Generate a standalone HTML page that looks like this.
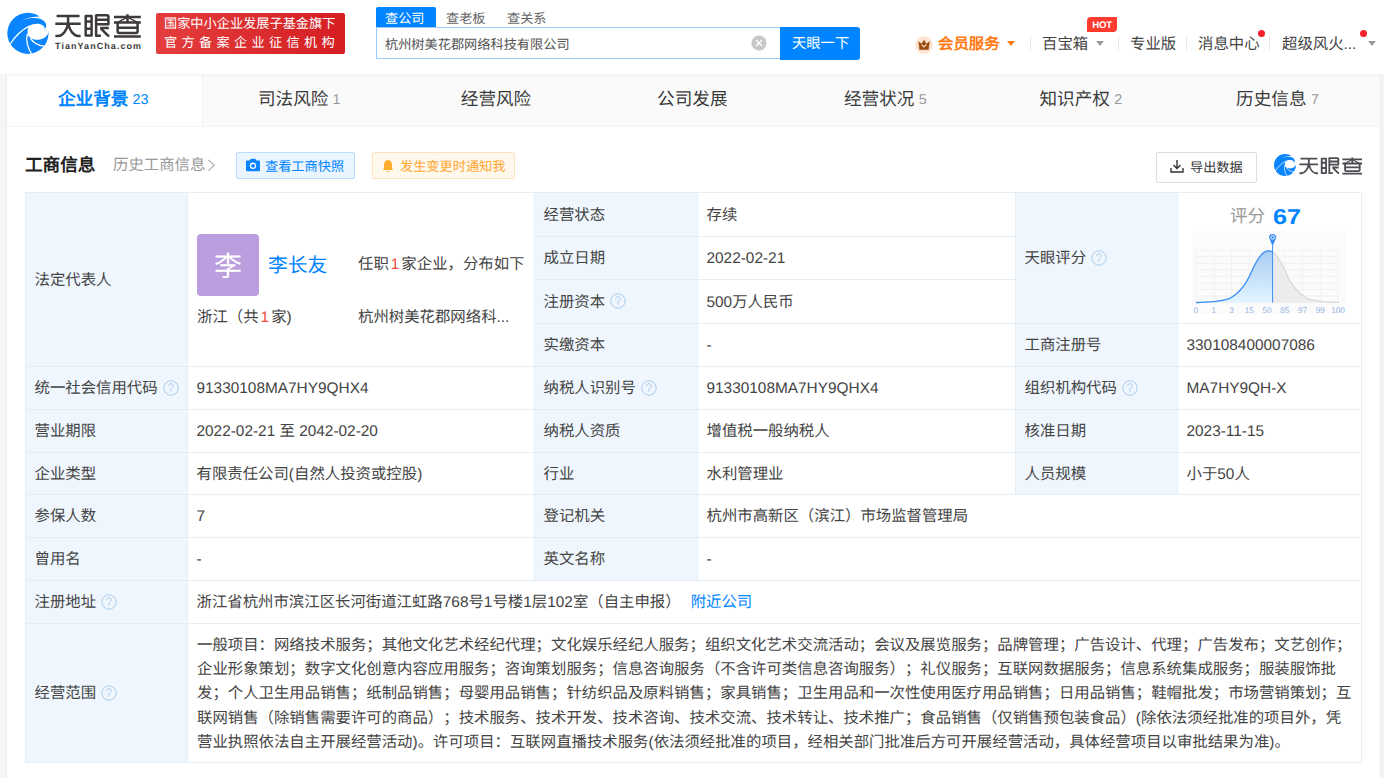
<!DOCTYPE html>
<html lang="zh-CN"><head><meta charset="utf-8"><style>
*{box-sizing:border-box;margin:0;padding:0}
html,body{width:1384px;height:778px;overflow:hidden;background:#f5f5f5;font-family:"Liberation Sans",sans-serif;color:#333;text-spacing-trim:space-all;text-rendering:geometricPrecision}
.abs{position:absolute}
.t{position:absolute;white-space:nowrap;line-height:20px}
.cell{position:absolute;overflow:hidden}
.lt{position:absolute;left:0;top:0;right:0;bottom:0;display:flex;align-items:center;padding-left:8.5px;padding-top:2px;font-size:15.4px;line-height:20px;white-space:nowrap;color:#444}
.a{position:relative;top:0px}
.q{display:inline-block;vertical-align:middle;margin-left:5px;position:relative;top:-1px}
</style></head><body>

<div class="abs" style="left:0;top:0;width:1384px;height:74px;background:#fff"></div>
<svg class="abs" style="left:4px;top:10px" width="48" height="48" viewBox="4 10 48 48"><circle cx="27.9" cy="33.3" r="20.6" fill="#0a84ff"/>
<path d="M29.1,26.2 C33,23.2 40,23 43,25.5 C44.8,27 45.2,28.5 44.4,29.7 L48.9,31.6 C48,35.5 44.5,38.8 40,39.6 C36,40.2 33,39.5 31.5,38.6 C29,37 27.8,35.8 27.7,34.6 C27.2,31 27.8,28 29.1,26.2 Z" fill="#fff"/>
<path d="M9.5,45 C15,36.5 22,29.5 29.6,25.9" stroke="#fff" stroke-width="1.3" fill="none"/>
<path d="M27.3,34 C25.8,40 27.3,47 31.8,54.5" stroke="#fff" stroke-width="1.3" fill="none"/>
<path d="M30.3,38.2 C33,42.5 38,45.5 44.5,46.4" stroke="#fff" stroke-width="1.3" fill="none"/>
<path d="M21.2,20.7 C25.5,18.2 31.5,16.6 38.9,16.4 L40,8 H53 V31.9 L48.6,31.9 L44.5,29.7 C46.4,27.6 46.7,24.6 45.5,22.6 C43,18.9 37,17.6 31,18.1 C27.2,18.5 24,19.5 21.2,20.7 Z" fill="#fff"/></svg>
<svg class="abs" style="left:0;top:0" width="150" height="45" viewBox="0 0 150 45"><g fill="none" stroke="#3e3a39" stroke-width="2.5" stroke-linecap="butt" stroke-linejoin="round">
<path d="M56.6,16 H79.6 M55.3,23.7 H80.7 M68.1,16 V23.7"/>
<path d="M68,23.7 C66.8,30 63,35.9 58,35.9 H55.4"/>
<path d="M68.2,23.7 C69.6,30 73.4,35.9 78.4,35.9 H80.6"/>
<path d="M85.7,15.9 H91.6 V35.6 H85.7 Z M85.7,21.5 H91.6 M85.7,28.7 H91.6"/>
<path d="M96.1,14.4 V35.8 H100.9"/>
<path d="M96.1,15.2 H107 Q108.4,15.2 108.4,16.6 V24.2 H96.1 M96.1,19.8 H108.4"/>
<path d="M100.2,28 H108.8 M100.8,28.3 L107.2,34.8 Q108,35.7 109.4,35.8"/>
<path d="M114,16.9 H140.8 M127.5,14.3 V21.8 M114,22.6 H140.8 M114,36.5 H140.8"/>
<path d="M117.65,22.6 V31.3 Q117.65,32.9 119.3,32.9 H136 Q137.6,32.9 137.6,31.3 V22.6 M117.65,27.8 H137.6"/>
<path d="M127.5,17.2 L117.6,22.4 M127.5,17.2 L137.5,22.4" stroke-width="1.5"/>
</g></svg>
<div class="t" style="left:55px;top:40px;font-size:9px;line-height:12px;color:#3e3a39;font-weight:bold;letter-spacing:1.05px">TianYanCha.com</div>
<div class="abs" style="left:156px;top:13px;width:189px;height:41px;border-radius:2px;background:linear-gradient(90deg,#e43d3d,#d41e22)"></div>
<div class="t" style="left:164px;top:14px;font-size:13.2px;line-height:20px;color:#fff">国家中小企业发展子基金旗下</div>
<div class="t" style="left:164px;top:33px;font-size:13.2px;line-height:20px;color:#fff;letter-spacing:4.3px">官方备案企业征信机构</div>
<div class="abs" style="left:376px;top:7px;width:60px;height:20px;background:#0084ff;border-radius:2px 2px 0 0"></div>
<div class="t" style="left:385px;top:8.5px;font-size:13.2px;line-height:20px;color:#fff">查公司</div>
<div class="t" style="left:446px;top:8.5px;font-size:13.2px;line-height:20px;color:#666">查老板</div>
<div class="t" style="left:507px;top:8.5px;font-size:13.2px;line-height:20px;color:#666">查关系</div>
<div class="abs" style="left:376px;top:27px;width:406px;height:32px;border:1px solid #9ccbff;border-right:none;background:#fff"></div>
<div class="t" style="left:385px;top:35px;font-size:13.2px;line-height:20px;color:#555">杭州树美花郡网络科技有限公司</div>
<svg class="abs" style="left:751px;top:35px" width="16" height="16" viewBox="0 0 16 16"><circle cx="8" cy="8" r="7.6" fill="#c8c8c8"/><path d="M5 5L11 11M11 5L5 11" stroke="#fff" stroke-width="1.3"/></svg>
<div class="abs" style="left:780px;top:27px;width:80px;height:32.5px;background:#0084ff;border-radius:0 3px 3px 0"></div>
<div class="t" style="left:792px;top:34px;font-size:14.3px;line-height:20px;color:#fff">天眼一下</div>
<svg class="abs" style="left:915px;top:36px" width="18" height="18" viewBox="0 0 18 18"><circle cx="9" cy="9" r="8.8" fill="#fde4d2"/><path d="M3.8,5.8 L6.5,8 L9,4.2 L11.5,8 L14.4,5.8 L13.4,13.6 L4.6,13.6 Z" fill="#9b4a0e" stroke="#9b4a0e" stroke-width="0.5" stroke-linejoin="round"/><path d="M6.6,8.6 L8.9,10.9 L11.4,8.6" stroke="#f6dccb" stroke-width="1.3" fill="none"/></svg>
<div class="t" style="left:938px;top:35px;font-size:15.4px;line-height:20px;color:#ff7a12;font-weight:bold">会员服务</div>
<div class="abs" style="left:1007px;top:41px;width:0;height:0;border-left:4.5px solid transparent;border-right:4.5px solid transparent;border-top:5px solid #ff7a12"></div>
<div class="abs" style="left:1030px;top:36px;width:1px;height:14px;background:#e8e8e8"></div>
<div class="t" style="left:1042px;top:35px;font-size:15.4px;line-height:20px;color:#444">百宝箱</div>
<div class="abs" style="left:1096px;top:41px;width:0;height:0;border-left:4.5px solid transparent;border-right:4.5px solid transparent;border-top:5px solid #999"></div>
<div class="abs" style="left:1087px;top:17px;width:30px;height:15px;background:#ff3b30;border-radius:4px 0 4px 0"></div>
<div class="t" style="left:1087px;top:17.5px;width:30px;text-align:center;font-size:9.6px;line-height:15px;color:#fff;font-weight:bold;letter-spacing:-0.2px">HOT</div>
<div class="abs" style="left:1118px;top:36px;width:1px;height:14px;background:#e8e8e8"></div>
<div class="t" style="left:1130px;top:35px;font-size:15.4px;line-height:20px;color:#444">专业版</div>
<div class="abs" style="left:1186px;top:36px;width:1px;height:14px;background:#e8e8e8"></div>
<div class="t" style="left:1198px;top:35px;font-size:15.4px;line-height:20px;color:#444">消息中心</div>
<div class="abs" style="left:1258px;top:30px;width:7px;height:7px;border-radius:50%;background:#f5222d"></div>
<div class="abs" style="left:1269px;top:36px;width:1px;height:14px;background:#e8e8e8"></div>
<div class="t" style="left:1282px;top:35px;font-size:15.4px;line-height:20px;color:#444">超级风火...</div>
<div class="abs" style="left:1360px;top:30px;width:7px;height:7px;border-radius:50%;background:#f5222d"></div>
<div class="abs" style="left:1368px;top:41px;width:0;height:0;border-left:4.5px solid transparent;border-right:4.5px solid transparent;border-top:5px solid #999"></div>
<div class="abs" style="left:6px;top:74px;width:1375px;height:704px;background:#fff;border-left:1px solid #ececec;border-right:1px solid #ececec"></div>
<div class="abs" style="left:7px;top:74px;width:1373px;height:53px;background:#fafafa;border-bottom:1px solid #f6f6f6"></div>
<div class="abs" style="left:7px;top:74px;width:196px;height:53px;background:#fff;border-right:1px solid #f1f1f1"></div>
<div class="abs" style="left:7px;top:126px;width:1373px;height:1px;background:#f6f6f6"></div>
<div class="abs" style="left:7px;top:74px;width:1373px;height:4px;background:linear-gradient(rgba(0,0,0,0.035),rgba(0,0,0,0))"></div>
<div class="t" style="left:58.0px;top:88px;font-size:17.6px;line-height:22px;color:#0084ff;font-weight:bold">企业背景</div>
<div class="t" style="left:132.6px;top:89px;font-size:14.3px;line-height:22px;color:#0084ff">23</div>
<div class="t" style="left:258.0px;top:88px;font-size:17.6px;line-height:22px;color:#3a3a3a;font-weight:normal">司法风险</div>
<div class="t" style="left:332.6px;top:89px;font-size:14.3px;line-height:22px;color:#999">1</div>
<div class="t" style="left:460.8px;top:88px;font-size:17.6px;line-height:22px;color:#3a3a3a;font-weight:normal">经营风险</div>
<div class="t" style="left:657.1px;top:88px;font-size:17.6px;line-height:22px;color:#3a3a3a;font-weight:normal">公司发展</div>
<div class="t" style="left:844.0px;top:88px;font-size:17.6px;line-height:22px;color:#3a3a3a;font-weight:normal">经营状况</div>
<div class="t" style="left:918.7px;top:89px;font-size:14.3px;line-height:22px;color:#999">5</div>
<div class="t" style="left:1039.5px;top:88px;font-size:17.6px;line-height:22px;color:#3a3a3a;font-weight:normal">知识产权</div>
<div class="t" style="left:1114.3px;top:89px;font-size:14.3px;line-height:22px;color:#999">2</div>
<div class="t" style="left:1236.1px;top:88px;font-size:17.6px;line-height:22px;color:#3a3a3a;font-weight:normal">历史信息</div>
<div class="t" style="left:1310.9px;top:89px;font-size:14.3px;line-height:22px;color:#999">7</div>
<div class="t" style="left:25px;top:154px;font-size:17.6px;line-height:22px;color:#222;font-weight:bold">工商信息</div>
<div class="t" style="left:113px;top:156px;font-size:15.4px;line-height:20px;color:#999">历史工商信息</div>
<svg class="abs" style="left:206px;top:158px" width="10" height="14" viewBox="0 0 10 14"><path d="M2.3 1.8L8.3 7.2L2.3 12.6" stroke="#a6a6a6" stroke-width="1.1" fill="none"/></svg>
<div class="abs" style="left:236px;top:152px;width:119px;height:27px;background:#ebf5ff;border:1px solid #bcdcff;border-radius:2px"></div>
<svg class="abs" style="left:245px;top:158px" width="16" height="14" viewBox="0 0 16 14"><path d="M1 3.5Q1 2.5 2 2.5H4.5L5.8 0.8H10.2L11.5 2.5H14Q15 2.5 15 3.5V12.2Q15 13.2 14 13.2H2Q1 13.2 1 12.2Z" fill="#0a84ff"/><circle cx="8" cy="7.8" r="3.2" fill="#fff"/><circle cx="8" cy="7.8" r="1.9" fill="#0a84ff"/></svg>
<div class="t" style="left:265px;top:157px;font-size:13.2px;line-height:20px;color:#0084ff">查看工商快照</div>
<div class="abs" style="left:372px;top:152px;width:143px;height:27px;background:#fff8ec;border:1px solid #ffe3b8;border-radius:2px"></div>
<svg class="abs" style="left:382px;top:159px" width="12" height="14" viewBox="0 0 12 14"><path d="M6 1Q10 1.5 10 6V9.5L11.5 11H0.5L2 9.5V6Q2 1.5 6 1Z" fill="#ffab2e"/><path d="M4.3 12Q6 14.2 7.7 12Z" fill="#ffab2e"/></svg>
<div class="t" style="left:400px;top:157px;font-size:13.2px;line-height:20px;color:#ffa630">发生变更时通知我</div>
<div class="abs" style="left:1156px;top:152px;width:101px;height:31px;background:#fff;border:1px solid #dedede;border-radius:2px"></div>
<svg class="abs" style="left:1169px;top:158px" width="16" height="16" viewBox="0 0 16 16"><path d="M8 2V10.5M4.5 7L8 10.5L11.5 7M2 10V14H14V10" stroke="#333" stroke-width="1.4" fill="none"/></svg>
<div class="t" style="left:1190px;top:158px;font-size:13.2px;line-height:20px;color:#333">导出数据</div>
<svg class="abs" style="left:1274px;top:154px" width="22" height="22" viewBox="7.3 12.7 41.2 41.2"><circle cx="27.9" cy="33.3" r="20.6" fill="#0a84ff"/>
<path d="M29.1,26.2 C33,23.2 40,23 43,25.5 C44.8,27 45.2,28.5 44.4,29.7 L48.9,31.6 C48,35.5 44.5,38.8 40,39.6 C36,40.2 33,39.5 31.5,38.6 C29,37 27.8,35.8 27.7,34.6 C27.2,31 27.8,28 29.1,26.2 Z" fill="#fff"/>
<path d="M9.5,45 C15,36.5 22,29.5 29.6,25.9" stroke="#fff" stroke-width="1.3" fill="none"/>
<path d="M27.3,34 C25.8,40 27.3,47 31.8,54.5" stroke="#fff" stroke-width="1.3" fill="none"/>
<path d="M30.3,38.2 C33,42.5 38,45.5 44.5,46.4" stroke="#fff" stroke-width="1.3" fill="none"/>
<path d="M21.2,20.7 C25.5,18.2 31.5,16.6 38.9,16.4 L40,8 H53 V31.9 L48.6,31.9 L44.5,29.7 C46.4,27.6 46.7,24.6 45.5,22.6 C43,18.9 37,17.6 31,18.1 C27.2,18.5 24,19.5 21.2,20.7 Z" fill="#fff"/></svg>
<svg class="abs" style="left:1297.54px;top:155.54px" width="65.51" height="20.13" viewBox="53.3 12.3 89.5 27.5"><g fill="none" stroke="#4c4c52" stroke-width="2.5" stroke-linecap="butt" stroke-linejoin="round">
<path d="M56.6,16 H79.6 M55.3,23.7 H80.7 M68.1,16 V23.7"/>
<path d="M68,23.7 C66.8,30 63,35.9 58,35.9 H55.4"/>
<path d="M68.2,23.7 C69.6,30 73.4,35.9 78.4,35.9 H80.6"/>
<path d="M85.7,15.9 H91.6 V35.6 H85.7 Z M85.7,21.5 H91.6 M85.7,28.7 H91.6"/>
<path d="M96.1,14.4 V35.8 H100.9"/>
<path d="M96.1,15.2 H107 Q108.4,15.2 108.4,16.6 V24.2 H96.1 M96.1,19.8 H108.4"/>
<path d="M100.2,28 H108.8 M100.8,28.3 L107.2,34.8 Q108,35.7 109.4,35.8"/>
<path d="M114,16.9 H140.8 M127.5,14.3 V21.8 M114,22.6 H140.8 M114,36.5 H140.8"/>
<path d="M117.65,22.6 V31.3 Q117.65,32.9 119.3,32.9 H136 Q137.6,32.9 137.6,31.3 V22.6 M117.65,27.8 H137.6"/>
<path d="M127.5,17.2 L117.6,22.4 M127.5,17.2 L137.5,22.4" stroke-width="1.5"/>
</g></svg>
<div class="abs" style="left:25px;top:192px;width:1337px;height:571px;background:#e4eef6"></div>
<div class="cell" style="left:26px;top:193px;width:161px;height:173px;background:#eff6fd;"><div class="lt"><span>法定代表人</span></div></div>
<div class="cell" style="left:188px;top:193px;width:346px;height:173px;background:#fff;"><div class="abs" style="left:9px;top:41px;width:62px;height:62px;border-radius:4px;background:#bb9edd"></div>
<div class="t" style="left:9px;top:41px;width:62px;text-align:center;font-size:28px;line-height:65px;color:#fff">李</div>
<div class="t" style="left:80px;top:60.5px;font-size:19.8px;line-height:24px;color:#0084ff">李长友</div>
<div class="t" style="left:170px;top:62px;font-size:15.4px;line-height:20px;color:#444">任职<span style="color:#f0483e;margin:0 2px">1</span>家企业，分布如下</div>
<div class="t" style="left:9px;top:115px;font-size:15.4px;line-height:20px;color:#444">浙江（共<span style="color:#f0483e;margin:0 2px">1</span>家)</div>
<div class="t" style="left:170px;top:115px;font-size:15.4px;line-height:20px;color:#444">杭州树美花郡网络科...</div></div>
<div class="cell" style="left:535px;top:193px;width:162px;height:43px;background:#eff6fd;"><div class="lt"><span>经营状态</span></div></div>
<div class="cell" style="left:698px;top:193px;width:317px;height:43px;background:#fff;"><div class="lt"><span>存续</span></div></div>
<div class="cell" style="left:535px;top:237px;width:162px;height:42px;background:#eff6fd;"><div class="lt"><span>成立日期</span></div></div>
<div class="cell" style="left:698px;top:237px;width:317px;height:42px;background:#fff;"><div class="lt"><span><span class="a">2022-02-21</span></span></div></div>
<div class="cell" style="left:535px;top:280px;width:162px;height:43px;background:#eff6fd;"><div class="lt"><span>注册资本<svg class="q" width="16" height="16" viewBox="0 0 16 16"><circle cx="8" cy="8" r="7.2" fill="none" stroke="#a9ccee" stroke-width="1"/><path d="M5.6,6.1 C5.6,4.6 6.7,3.7 8,3.7 C9.3,3.7 10.3,4.6 10.3,5.9 C10.3,7.1 9.3,7.6 8.6,8.1 C8.1,8.5 7.9,8.9 7.9,9.6 V11.8" fill="none" stroke="#a9ccee" stroke-width="1"/></svg></span></div></div>
<div class="cell" style="left:698px;top:280px;width:317px;height:43px;background:#fff;"><div class="lt"><span><span class="a">500</span>万人民币</span></div></div>
<div class="cell" style="left:535px;top:324px;width:162px;height:42px;background:#eff6fd;"><div class="lt"><span>实缴资本</span></div></div>
<div class="cell" style="left:698px;top:324px;width:317px;height:42px;background:#fff;"><div class="lt"><span><span class="a">-</span></span></div></div>
<div class="cell" style="left:1016px;top:193px;width:161px;height:130px;background:#eff6fd;"><div class="lt"><span>天眼评分<svg class="q" width="16" height="16" viewBox="0 0 16 16"><circle cx="8" cy="8" r="7.2" fill="none" stroke="#a9ccee" stroke-width="1"/><path d="M5.6,6.1 C5.6,4.6 6.7,3.7 8,3.7 C9.3,3.7 10.3,4.6 10.3,5.9 C10.3,7.1 9.3,7.6 8.6,8.1 C8.1,8.5 7.9,8.9 7.9,9.6 V11.8" fill="none" stroke="#a9ccee" stroke-width="1"/></svg></span></div></div>
<div class="cell" style="left:1178px;top:193px;width:183px;height:130px;background:#fff;"><div class="t" style="left:52px;top:12px;font-size:17.6px;line-height:22px;color:#999">评分</div>
<div class="t" style="left:95px;top:11px;font-size:21.5px;line-height:26px;color:#0084ff;font-weight:bold;transform:scaleX(1.17);transform-origin:0 0">67</div>
<svg class="abs" style="left:0;top:0" width="184" height="130" viewBox="0 0 184 130"><defs><linearGradient id="g1" x1="0" y1="0" x2="0" y2="1"><stop offset="0" stop-color="#a9cdf5"/><stop offset="1" stop-color="#e2f4fe"/></linearGradient></defs><rect x="14" y="38" width="154" height="83" fill="#fbfbfb"/><line x1="18.0" y1="57.4" x2="18.0" y2="109.6" stroke="#ececec" stroke-width="0.6"/><line x1="35.8" y1="57.4" x2="35.8" y2="109.6" stroke="#ececec" stroke-width="0.6"/><line x1="53.5" y1="57.4" x2="53.5" y2="109.6" stroke="#ececec" stroke-width="0.6"/><line x1="71.2" y1="57.4" x2="71.2" y2="109.6" stroke="#ececec" stroke-width="0.6"/><line x1="89.0" y1="57.4" x2="89.0" y2="109.6" stroke="#ececec" stroke-width="0.6"/><line x1="106.8" y1="57.4" x2="106.8" y2="109.6" stroke="#ececec" stroke-width="0.6"/><line x1="124.5" y1="57.4" x2="124.5" y2="109.6" stroke="#ececec" stroke-width="0.6"/><line x1="142.2" y1="57.4" x2="142.2" y2="109.6" stroke="#ececec" stroke-width="0.6"/><line x1="160.0" y1="57.4" x2="160.0" y2="109.6" stroke="#ececec" stroke-width="0.6"/><line x1="18.0" y1="57.4" x2="160.0" y2="57.4" stroke="#ececec" stroke-width="0.6"/><line x1="18.0" y1="63.9" x2="160.0" y2="63.9" stroke="#ececec" stroke-width="0.6"/><line x1="18.0" y1="70.5" x2="160.0" y2="70.5" stroke="#ececec" stroke-width="0.6"/><line x1="18.0" y1="77.0" x2="160.0" y2="77.0" stroke="#ececec" stroke-width="0.6"/><line x1="18.0" y1="83.5" x2="160.0" y2="83.5" stroke="#ececec" stroke-width="0.6"/><line x1="18.0" y1="90.0" x2="160.0" y2="90.0" stroke="#ececec" stroke-width="0.6"/><line x1="18.0" y1="96.6" x2="160.0" y2="96.6" stroke="#ececec" stroke-width="0.6"/><line x1="18.0" y1="103.1" x2="160.0" y2="103.1" stroke="#ececec" stroke-width="0.6"/><line x1="18.0" y1="109.6" x2="160.0" y2="109.6" stroke="#ececec" stroke-width="0.6"/><path d="M94.0,58.8 L94.5,59.1 L95.0,59.4 L95.5,59.7 L96.0,60.1 L96.5,60.5 L97.0,61.0 L97.5,61.5 L98.0,62.1 L98.5,62.8 L99.0,63.4 L99.5,64.1 L100.0,64.8 L100.5,65.5 L101.0,66.3 L101.5,67.1 L102.0,67.9 L102.5,68.8 L103.0,69.7 L103.5,70.6 L104.0,71.6 L104.5,72.5 L105.0,73.5 L105.5,74.5 L106.0,75.6 L106.5,76.6 L107.0,77.7 L107.5,78.8 L108.0,79.8 L108.5,80.9 L109.0,81.9 L109.5,83.0 L110.0,84.0 L110.5,85.0 L111.0,85.9 L111.5,86.9 L112.0,87.8 L112.5,88.6 L113.0,89.4 L113.5,90.2 L114.0,90.9 L114.5,91.7 L115.0,92.4 L115.5,93.1 L116.0,93.7 L116.5,94.4 L117.0,95.0 L117.5,95.6 L118.0,96.2 L118.5,96.8 L119.0,97.3 L119.5,97.8 L120.0,98.3 L120.5,98.8 L121.0,99.3 L121.5,99.8 L122.0,100.2 L122.5,100.7 L123.0,101.1 L123.5,101.5 L124.0,101.9 L124.5,102.2 L125.0,102.6 L125.5,102.9 L126.0,103.3 L126.5,103.6 L127.0,104.0 L127.5,104.3 L128.0,104.6 L128.5,104.9 L129.0,105.1 L129.5,105.4 L130.0,105.6 L130.5,105.8 L131.0,106.0 L131.5,106.2 L132.0,106.4 L132.5,106.5 L133.0,106.6 L133.5,106.7 L134.0,106.8 L134.5,106.9 L135.0,107.0 L135.5,107.1 L136.0,107.2 L136.5,107.3 L137.0,107.4 L137.5,107.5 L138.0,107.6 L138.5,107.7 L139.0,107.7 L139.5,107.8 L140.0,107.9 L140.5,108.0 L141.0,108.1 L141.5,108.2 L142.0,108.2 L142.5,108.3 L143.0,108.4 L143.5,108.4 L144.0,108.5 L144.5,108.6 L145.0,108.6 L145.5,108.6 L146.0,108.7 L146.5,108.7 L147.0,108.7 L147.5,108.8 L148.0,108.8 L148.5,108.8 L149.0,108.9 L149.5,108.9 L150.0,108.9 L150.5,108.9 L151.0,109.0 L151.5,109.0 L152.0,109.0 L152.5,109.1 L153.0,109.1 L153.5,109.1 L154.0,109.1 L154.5,109.2 L155.0,109.2 L155.5,109.2 L156.0,109.2 L156.5,109.3 L157.0,109.3 L157.5,109.3 L158.0,109.4 L158.5,109.4 L159.0,109.4 L159.5,109.4 L160.0,109.5 L160.5,109.5 L161.0,109.5 L161.0,109.6 L94.0,109.6Z" fill="#ececec"/><path d="M94.0,58.8 L94.5,59.1 L95.0,59.4 L95.5,59.7 L96.0,60.1 L96.5,60.5 L97.0,61.0 L97.5,61.5 L98.0,62.1 L98.5,62.8 L99.0,63.4 L99.5,64.1 L100.0,64.8 L100.5,65.5 L101.0,66.3 L101.5,67.1 L102.0,67.9 L102.5,68.8 L103.0,69.7 L103.5,70.6 L104.0,71.6 L104.5,72.5 L105.0,73.5 L105.5,74.5 L106.0,75.6 L106.5,76.6 L107.0,77.7 L107.5,78.8 L108.0,79.8 L108.5,80.9 L109.0,81.9 L109.5,83.0 L110.0,84.0 L110.5,85.0 L111.0,85.9 L111.5,86.9 L112.0,87.8 L112.5,88.6 L113.0,89.4 L113.5,90.2 L114.0,90.9 L114.5,91.7 L115.0,92.4 L115.5,93.1 L116.0,93.7 L116.5,94.4 L117.0,95.0 L117.5,95.6 L118.0,96.2 L118.5,96.8 L119.0,97.3 L119.5,97.8 L120.0,98.3 L120.5,98.8 L121.0,99.3 L121.5,99.8 L122.0,100.2 L122.5,100.7 L123.0,101.1 L123.5,101.5 L124.0,101.9 L124.5,102.2 L125.0,102.6 L125.5,102.9 L126.0,103.3 L126.5,103.6 L127.0,104.0 L127.5,104.3 L128.0,104.6 L128.5,104.9 L129.0,105.1 L129.5,105.4 L130.0,105.6 L130.5,105.8 L131.0,106.0 L131.5,106.2 L132.0,106.4 L132.5,106.5 L133.0,106.6 L133.5,106.7 L134.0,106.8 L134.5,106.9 L135.0,107.0 L135.5,107.1 L136.0,107.2 L136.5,107.3 L137.0,107.4 L137.5,107.5 L138.0,107.6 L138.5,107.7 L139.0,107.7 L139.5,107.8 L140.0,107.9 L140.5,108.0 L141.0,108.1 L141.5,108.2 L142.0,108.2 L142.5,108.3 L143.0,108.4 L143.5,108.4 L144.0,108.5 L144.5,108.6 L145.0,108.6 L145.5,108.6 L146.0,108.7 L146.5,108.7 L147.0,108.7 L147.5,108.8 L148.0,108.8 L148.5,108.8 L149.0,108.9 L149.5,108.9 L150.0,108.9 L150.5,108.9 L151.0,109.0 L151.5,109.0 L152.0,109.0 L152.5,109.1 L153.0,109.1 L153.5,109.1 L154.0,109.1 L154.5,109.2 L155.0,109.2 L155.5,109.2 L156.0,109.2 L156.5,109.3 L157.0,109.3 L157.5,109.3 L158.0,109.4 L158.5,109.4 L159.0,109.4 L159.5,109.4 L160.0,109.5 L160.5,109.5 L161.0,109.5" stroke="#d9d9d9" stroke-width="1.3" fill="none"/><path d="M18.0,109.6 L18.5,109.6 L19.0,109.5 L19.5,109.5 L20.0,109.5 L20.5,109.5 L21.0,109.5 L21.5,109.4 L22.0,109.4 L22.5,109.4 L23.0,109.4 L23.5,109.3 L24.0,109.3 L24.5,109.3 L25.0,109.2 L25.5,109.2 L26.0,109.2 L26.5,109.2 L27.0,109.1 L27.5,109.1 L28.0,109.1 L28.5,109.1 L29.0,109.0 L29.5,109.0 L30.0,109.0 L30.5,108.9 L31.0,108.9 L31.5,108.9 L32.0,108.9 L32.5,108.8 L33.0,108.8 L33.5,108.8 L34.0,108.7 L34.5,108.7 L35.0,108.7 L35.5,108.6 L36.0,108.6 L36.5,108.6 L37.0,108.5 L37.5,108.4 L38.0,108.4 L38.5,108.3 L39.0,108.2 L39.5,108.2 L40.0,108.1 L40.5,108.0 L41.0,107.9 L41.5,107.8 L42.0,107.7 L42.5,107.7 L43.0,107.6 L43.5,107.5 L44.0,107.4 L44.5,107.3 L45.0,107.2 L45.5,107.1 L46.0,107.0 L46.5,106.9 L47.0,106.8 L47.5,106.7 L48.0,106.6 L48.5,106.5 L49.0,106.4 L49.5,106.2 L50.0,106.0 L50.5,105.8 L51.0,105.6 L51.5,105.4 L52.0,105.1 L52.5,104.9 L53.0,104.6 L53.5,104.3 L54.0,104.0 L54.5,103.6 L55.0,103.3 L55.5,102.9 L56.0,102.6 L56.5,102.2 L57.0,101.9 L57.5,101.5 L58.0,101.1 L58.5,100.7 L59.0,100.2 L59.5,99.8 L60.0,99.3 L60.5,98.8 L61.0,98.3 L61.5,97.8 L62.0,97.3 L62.5,96.8 L63.0,96.2 L63.5,95.6 L64.0,95.0 L64.5,94.4 L65.0,93.7 L65.5,93.1 L66.0,92.4 L66.5,91.7 L67.0,90.9 L67.5,90.2 L68.0,89.4 L68.5,88.6 L69.0,87.8 L69.5,86.9 L70.0,85.9 L70.5,85.0 L71.0,84.0 L71.5,83.0 L72.0,81.9 L72.5,80.9 L73.0,79.8 L73.5,78.8 L74.0,77.7 L74.5,76.6 L75.0,75.6 L75.5,74.5 L76.0,73.5 L76.5,72.5 L77.0,71.6 L77.5,70.6 L78.0,69.7 L78.5,68.8 L79.0,67.9 L79.5,67.1 L80.0,66.3 L80.5,65.5 L81.0,64.8 L81.5,64.1 L82.0,63.4 L82.5,62.8 L83.0,62.1 L83.5,61.5 L84.0,61.0 L84.5,60.5 L85.0,60.1 L85.5,59.7 L86.0,59.4 L86.5,59.1 L87.0,58.8 L87.5,58.5 L88.0,58.3 L88.5,58.2 L89.0,58.0 L89.5,58.0 L90.0,57.9 L90.5,57.9 L91.0,57.9 L91.5,58.0 L92.0,58.0 L92.5,58.2 L93.0,58.3 L93.5,58.5 L94.0,58.8 L94.5,59.1 L94.6,109.6 L18.0,109.6Z" fill="url(#g1)"/><path d="M18.0,109.6 L18.5,109.6 L19.0,109.5 L19.5,109.5 L20.0,109.5 L20.5,109.5 L21.0,109.5 L21.5,109.4 L22.0,109.4 L22.5,109.4 L23.0,109.4 L23.5,109.3 L24.0,109.3 L24.5,109.3 L25.0,109.2 L25.5,109.2 L26.0,109.2 L26.5,109.2 L27.0,109.1 L27.5,109.1 L28.0,109.1 L28.5,109.1 L29.0,109.0 L29.5,109.0 L30.0,109.0 L30.5,108.9 L31.0,108.9 L31.5,108.9 L32.0,108.9 L32.5,108.8 L33.0,108.8 L33.5,108.8 L34.0,108.7 L34.5,108.7 L35.0,108.7 L35.5,108.6 L36.0,108.6 L36.5,108.6 L37.0,108.5 L37.5,108.4 L38.0,108.4 L38.5,108.3 L39.0,108.2 L39.5,108.2 L40.0,108.1 L40.5,108.0 L41.0,107.9 L41.5,107.8 L42.0,107.7 L42.5,107.7 L43.0,107.6 L43.5,107.5 L44.0,107.4 L44.5,107.3 L45.0,107.2 L45.5,107.1 L46.0,107.0 L46.5,106.9 L47.0,106.8 L47.5,106.7 L48.0,106.6 L48.5,106.5 L49.0,106.4 L49.5,106.2 L50.0,106.0 L50.5,105.8 L51.0,105.6 L51.5,105.4 L52.0,105.1 L52.5,104.9 L53.0,104.6 L53.5,104.3 L54.0,104.0 L54.5,103.6 L55.0,103.3 L55.5,102.9 L56.0,102.6 L56.5,102.2 L57.0,101.9 L57.5,101.5 L58.0,101.1 L58.5,100.7 L59.0,100.2 L59.5,99.8 L60.0,99.3 L60.5,98.8 L61.0,98.3 L61.5,97.8 L62.0,97.3 L62.5,96.8 L63.0,96.2 L63.5,95.6 L64.0,95.0 L64.5,94.4 L65.0,93.7 L65.5,93.1 L66.0,92.4 L66.5,91.7 L67.0,90.9 L67.5,90.2 L68.0,89.4 L68.5,88.6 L69.0,87.8 L69.5,86.9 L70.0,85.9 L70.5,85.0 L71.0,84.0 L71.5,83.0 L72.0,81.9 L72.5,80.9 L73.0,79.8 L73.5,78.8 L74.0,77.7 L74.5,76.6 L75.0,75.6 L75.5,74.5 L76.0,73.5 L76.5,72.5 L77.0,71.6 L77.5,70.6 L78.0,69.7 L78.5,68.8 L79.0,67.9 L79.5,67.1 L80.0,66.3 L80.5,65.5 L81.0,64.8 L81.5,64.1 L82.0,63.4 L82.5,62.8 L83.0,62.1 L83.5,61.5 L84.0,61.0 L84.5,60.5 L85.0,60.1 L85.5,59.7 L86.0,59.4 L86.5,59.1 L87.0,58.8 L87.5,58.5 L88.0,58.3 L88.5,58.2 L89.0,58.0 L89.5,58.0 L90.0,57.9 L90.5,57.9 L91.0,57.9 L91.5,58.0 L92.0,58.0 L92.5,58.2 L93.0,58.3 L93.5,58.5 L94.0,58.8 L94.5,59.1" stroke="#3a8ef6" stroke-width="1.3" fill="none"/><line x1="94.6" y1="53" x2="94.6" y2="109.6" stroke="#3a8ef6" stroke-width="1"/><path d="M91.0,44.6 A3.6,3.6 0 1 1 98.2,44.6 L94.6,53.5Z" fill="#3a8ef6"/><circle cx="94.6" cy="44.4" r="1.8" fill="none" stroke="#fff" stroke-width="0.9"/><text x="18.0" y="120" text-anchor="middle" font-size="8.2" fill="#93b4e2" font-family="Liberation Sans">0</text><text x="35.8" y="120" text-anchor="middle" font-size="8.2" fill="#93b4e2" font-family="Liberation Sans">1</text><text x="53.5" y="120" text-anchor="middle" font-size="8.2" fill="#93b4e2" font-family="Liberation Sans">3</text><text x="71.2" y="120" text-anchor="middle" font-size="8.2" fill="#93b4e2" font-family="Liberation Sans">15</text><text x="89.0" y="120" text-anchor="middle" font-size="8.2" fill="#93b4e2" font-family="Liberation Sans">50</text><text x="106.8" y="120" text-anchor="middle" font-size="8.2" fill="#93b4e2" font-family="Liberation Sans">85</text><text x="124.5" y="120" text-anchor="middle" font-size="8.2" fill="#93b4e2" font-family="Liberation Sans">97</text><text x="142.2" y="120" text-anchor="middle" font-size="8.2" fill="#93b4e2" font-family="Liberation Sans">99</text><text x="160.0" y="120" text-anchor="middle" font-size="8.2" fill="#93b4e2" font-family="Liberation Sans">100</text></svg></div>
<div class="cell" style="left:1016px;top:324px;width:161px;height:42px;background:#eff6fd;"><div class="lt"><span>工商注册号</span></div></div>
<div class="cell" style="left:1178px;top:324px;width:183px;height:42px;background:#fff;"><div class="lt"><span><span class="a">330108400007086</span></span></div></div>
<div class="cell" style="left:26px;top:367px;width:161px;height:42px;background:#eff6fd;"><div class="lt"><span>统一社会信用代码<svg class="q" width="16" height="16" viewBox="0 0 16 16"><circle cx="8" cy="8" r="7.2" fill="none" stroke="#a9ccee" stroke-width="1"/><path d="M5.6,6.1 C5.6,4.6 6.7,3.7 8,3.7 C9.3,3.7 10.3,4.6 10.3,5.9 C10.3,7.1 9.3,7.6 8.6,8.1 C8.1,8.5 7.9,8.9 7.9,9.6 V11.8" fill="none" stroke="#a9ccee" stroke-width="1"/></svg></span></div></div>
<div class="cell" style="left:188px;top:367px;width:346px;height:42px;background:#fff;"><div class="lt"><span><span class="a">91330108MA7HY9QHX4</span></span></div></div>
<div class="cell" style="left:535px;top:367px;width:162px;height:42px;background:#eff6fd;"><div class="lt"><span>纳税人识别号<svg class="q" width="16" height="16" viewBox="0 0 16 16"><circle cx="8" cy="8" r="7.2" fill="none" stroke="#a9ccee" stroke-width="1"/><path d="M5.6,6.1 C5.6,4.6 6.7,3.7 8,3.7 C9.3,3.7 10.3,4.6 10.3,5.9 C10.3,7.1 9.3,7.6 8.6,8.1 C8.1,8.5 7.9,8.9 7.9,9.6 V11.8" fill="none" stroke="#a9ccee" stroke-width="1"/></svg></span></div></div>
<div class="cell" style="left:698px;top:367px;width:317px;height:42px;background:#fff;"><div class="lt"><span><span class="a">91330108MA7HY9QHX4</span></span></div></div>
<div class="cell" style="left:1016px;top:367px;width:161px;height:42px;background:#eff6fd;"><div class="lt"><span>组织机构代码<svg class="q" width="16" height="16" viewBox="0 0 16 16"><circle cx="8" cy="8" r="7.2" fill="none" stroke="#a9ccee" stroke-width="1"/><path d="M5.6,6.1 C5.6,4.6 6.7,3.7 8,3.7 C9.3,3.7 10.3,4.6 10.3,5.9 C10.3,7.1 9.3,7.6 8.6,8.1 C8.1,8.5 7.9,8.9 7.9,9.6 V11.8" fill="none" stroke="#a9ccee" stroke-width="1"/></svg></span></div></div>
<div class="cell" style="left:1178px;top:367px;width:183px;height:42px;background:#fff;"><div class="lt"><span><span class="a">MA7HY9QH-X</span></span></div></div>
<div class="cell" style="left:26px;top:410px;width:161px;height:42px;background:#eff6fd;"><div class="lt"><span>营业期限</span></div></div>
<div class="cell" style="left:188px;top:410px;width:346px;height:42px;background:#fff;"><div class="lt"><span><span class="a">2022-02-21</span> 至 <span class="a">2042-02-20</span></span></div></div>
<div class="cell" style="left:535px;top:410px;width:162px;height:42px;background:#eff6fd;"><div class="lt"><span>纳税人资质</span></div></div>
<div class="cell" style="left:698px;top:410px;width:317px;height:42px;background:#fff;"><div class="lt"><span>增值税一般纳税人</span></div></div>
<div class="cell" style="left:1016px;top:410px;width:161px;height:42px;background:#eff6fd;"><div class="lt"><span>核准日期</span></div></div>
<div class="cell" style="left:1178px;top:410px;width:183px;height:42px;background:#fff;"><div class="lt"><span><span class="a">2023-11-15</span></span></div></div>
<div class="cell" style="left:26px;top:453px;width:161px;height:41px;background:#eff6fd;"><div class="lt"><span>企业类型</span></div></div>
<div class="cell" style="left:188px;top:453px;width:346px;height:41px;background:#fff;"><div class="lt"><span>有限责任公司<span class="a">(</span>自然人投资或控股<span class="a">)</span></span></div></div>
<div class="cell" style="left:535px;top:453px;width:162px;height:41px;background:#eff6fd;"><div class="lt"><span>行业</span></div></div>
<div class="cell" style="left:698px;top:453px;width:317px;height:41px;background:#fff;"><div class="lt"><span>水利管理业</span></div></div>
<div class="cell" style="left:1016px;top:453px;width:161px;height:41px;background:#eff6fd;"><div class="lt"><span>人员规模</span></div></div>
<div class="cell" style="left:1178px;top:453px;width:183px;height:41px;background:#fff;"><div class="lt"><span>小于<span class="a">50</span>人</span></div></div>
<div class="cell" style="left:26px;top:495px;width:161px;height:42px;background:#eff6fd;"><div class="lt"><span>参保人数</span></div></div>
<div class="cell" style="left:188px;top:495px;width:346px;height:42px;background:#fff;"><div class="lt"><span><span class="a">7</span></span></div></div>
<div class="cell" style="left:535px;top:495px;width:162px;height:42px;background:#eff6fd;"><div class="lt"><span>登记机关</span></div></div>
<div class="cell" style="left:698px;top:495px;width:663px;height:42px;background:#fff;"><div class="lt"><span>杭州市高新区（滨江）市场监督管理局</span></div></div>
<div class="cell" style="left:26px;top:538px;width:161px;height:42px;background:#eff6fd;"><div class="lt"><span>曾用名</span></div></div>
<div class="cell" style="left:188px;top:538px;width:346px;height:42px;background:#fff;"><div class="lt"><span><span class="a">-</span></span></div></div>
<div class="cell" style="left:535px;top:538px;width:162px;height:42px;background:#eff6fd;"><div class="lt"><span>英文名称</span></div></div>
<div class="cell" style="left:698px;top:538px;width:663px;height:42px;background:#fff;"><div class="lt"><span><span class="a">-</span></span></div></div>
<div class="cell" style="left:26px;top:581px;width:161px;height:42px;background:#eff6fd;"><div class="lt"><span>注册地址<svg class="q" width="16" height="16" viewBox="0 0 16 16"><circle cx="8" cy="8" r="7.2" fill="none" stroke="#a9ccee" stroke-width="1"/><path d="M5.6,6.1 C5.6,4.6 6.7,3.7 8,3.7 C9.3,3.7 10.3,4.6 10.3,5.9 C10.3,7.1 9.3,7.6 8.6,8.1 C8.1,8.5 7.9,8.9 7.9,9.6 V11.8" fill="none" stroke="#a9ccee" stroke-width="1"/></svg></span></div></div>
<div class="cell" style="left:188px;top:581px;width:1173px;height:42px;background:#fff;"><div class="lt"><span>浙江省杭州市滨江区长河街道江虹路<span class="a">768</span>号<span class="a">1</span>号楼<span class="a">1</span>层<span class="a">102</span>室（自主申报）<span style="color:#0084ff;margin-left:10px">附近公司</span></span></div></div>
<div class="cell" style="left:26px;top:624px;width:161px;height:138px;background:#eff6fd;"><div class="lt"><span>经营范围<svg class="q" width="16" height="16" viewBox="0 0 16 16"><circle cx="8" cy="8" r="7.2" fill="none" stroke="#a9ccee" stroke-width="1"/><path d="M5.6,6.1 C5.6,4.6 6.7,3.7 8,3.7 C9.3,3.7 10.3,4.6 10.3,5.9 C10.3,7.1 9.3,7.6 8.6,8.1 C8.1,8.5 7.9,8.9 7.9,9.6 V11.8" fill="none" stroke="#a9ccee" stroke-width="1"/></svg></span></div></div>
<div class="cell" style="left:188px;top:624px;width:1173px;height:138px;background:#fff;"><div class="t" style="left:9px;top:10.0px;font-size:15.4px;line-height:24.2px;color:#444">一般项目：网络技术服务；其他文化艺术经纪代理；文化娱乐经纪人服务；组织文化艺术交流活动；会议及展览服务；品牌管理；广告设计、代理；广告发布；文艺创作；</div><div class="t" style="left:9px;top:34.0px;font-size:15.4px;line-height:24.2px;color:#444">企业形象策划；数字文化创意内容应用服务；咨询策划服务；信息咨询服务（不含许可类信息咨询服务）；礼仪服务；互联网数据服务；信息系统集成服务；服装服饰批</div><div class="t" style="left:9px;top:58.0px;font-size:15.4px;line-height:24.2px;color:#444">发；个人卫生用品销售；纸制品销售；母婴用品销售；针纺织品及原料销售；家具销售；卫生用品和一次性使用医疗用品销售；日用品销售；鞋帽批发；市场营销策划；互</div><div class="t" style="left:9px;top:83.0px;font-size:15.4px;line-height:24.2px;color:#444">联网销售（除销售需要许可的商品）；技术服务、技术开发、技术咨询、技术交流、技术转让、技术推广；食品销售（仅销售预包装食品）<span class="a">(</span>除依法须经批准的项目外，凭</div><div class="t" style="left:9px;top:107.0px;font-size:15.4px;line-height:24.2px;color:#444">营业执照依法自主开展经营活动<span class="a">)</span>。许可项目：互联网直播技术服务<span class="a">(</span>依法须经批准的项目，经相关部门批准后方可开展经营活动，具体经营项目以审批结果为准<span class="a">)</span>。</div></div>
</body></html>
